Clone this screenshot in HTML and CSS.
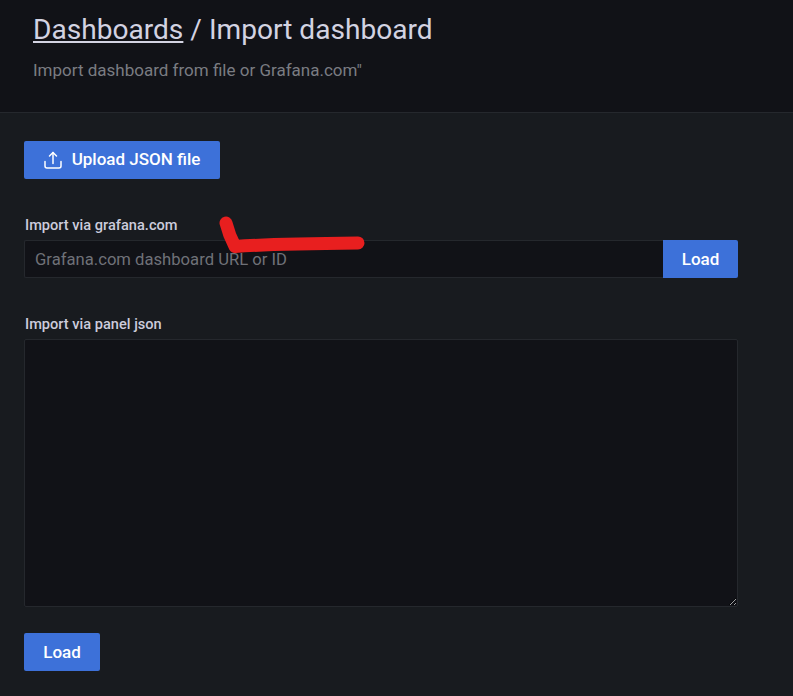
FILE: index.html
```html
<!DOCTYPE html>
<html lang="en">
<head>
<meta charset="utf-8">
<title>Import dashboard</title>
<link rel="stylesheet" href="styles.css">
</head>
<body>
<header class="page-header">
  <h1 class="title"><a class="crumb" href="#">Dashboards</a> / Import dashboard</h1>
  <p class="subtitle">Import dashboard from file or Grafana.com"</p>
</header>
<main class="content">
  <button class="btn btn-upload" type="button">
    <svg class="upload-icon" viewBox="0 0 18 18" width="18" height="18" fill="none" stroke="currentColor" stroke-width="1.5" stroke-linecap="round" stroke-linejoin="round" aria-hidden="true">
      <path d="M1 10.500V15a2 2 0 0 0 2 2h12a2 2 0 0 0 2-2v-4.500"/>
      <path d="M9 12.500V1.500"/>
      <path d="M5.500 5 9 1.500 12.500 5"/>
    </svg>
    <span>Upload JSON file</span>
  </button>
  <section class="field field-url">
    <label class="label" for="url">Import via grafana.com</label>
    <div class="input-row">
      <input class="input" id="url" type="text" placeholder="Grafana.com dashboard URL or ID">
      <button class="btn btn-addon" type="button">Load</button>
    </div>
  </section>
  <section class="field field-json">
    <label class="label" for="json">Import via panel json</label>
    <textarea class="textarea" id="json"></textarea>
  </section>
  <button class="btn btn-load" type="button">Load</button>
</main>
<svg class="annotation" viewBox="0 0 793 696" width="793" height="696" aria-hidden="true">
  <path d="M226 223 C228 231 231 239 235 246.500 C262 244.500 310 243.500 358 243" fill="none" stroke="#e81f1f" stroke-width="13" stroke-linecap="round" stroke-linejoin="round"/>
</svg>
</body>
</html>
```

FILE: styles.css
```css
* { box-sizing: border-box; }
html, body { margin: 0; height: 100%; }
body {
  position: relative;
  height: 696px;
  overflow: hidden;
  background: #181b1f;
  font-family: Roboto, "Liberation Sans", sans-serif;
  color: #ccccdc;
}
.page-header {
  height: 113px;
  padding: 12px 33px 0;
  background: #111217;
  border-bottom: 1px solid #25282d;
}
.title {
  margin: 0;
  font-size: 28.1px;
  font-weight: 400;
  line-height: 36px;
  color: #d3d3e2;
}
.crumb { color: inherit; text-decoration: underline; }
.subtitle {
  margin: 12px 0 0;
  font-size: 17px;
  line-height: 20px;
  color: #7a7c82;
}
.content { padding: 28px 24px 0; }
.btn {
  display: flex;
  align-items: center;
  justify-content: center;
  height: 38px;
  padding: 0;
  border: 0;
  border-radius: 2px;
  background: #3d71d9;
  color: #fff;
  font-family: inherit;
  font-size: 17px;
  font-weight: 500;
}
.btn-upload { width: 196px; gap: 10px; }
.btn-upload span { position: relative; top: -1px; }
.upload-icon { flex: none; }
.field-url { margin-top: 38px; }
.field-json { margin-top: 38px; }
.label {
  display: block;
  height: 23px;
  padding-left: 1px;
  font-size: 14.6px;
  font-weight: 500;
  line-height: 16px;
  color: #ccccdc;
}
.input-row { display: flex; width: 714px; height: 38px; }
.input {
  flex: 1;
  min-width: 0;
  height: 38px;
  padding: 0 10px;
  background: #111217;
  border: 1px solid #25282d;
  border-right: 0;
  border-radius: 2px 0 0 2px;
  color: #ccccdc;
  font-family: inherit;
  font-size: 16.65px;
  outline: none;
}
.input::placeholder { color: #6f7178; opacity: 1; }
.btn-addon { width: 75px; border-radius: 0 2px 2px 0; }
.textarea {
  display: block;
  width: 714px;
  height: 268px;
  padding: 8px 10px;
  background: #111217;
  border: 1px solid #25282d;
  border-radius: 2px;
  color: #ccccdc;
  outline: none;
  resize: both;
}
.btn-load { width: 76px; margin-top: 26px; }
.annotation {
  position: absolute;
  left: 0;
  top: 0;
  pointer-events: none;
}
```
